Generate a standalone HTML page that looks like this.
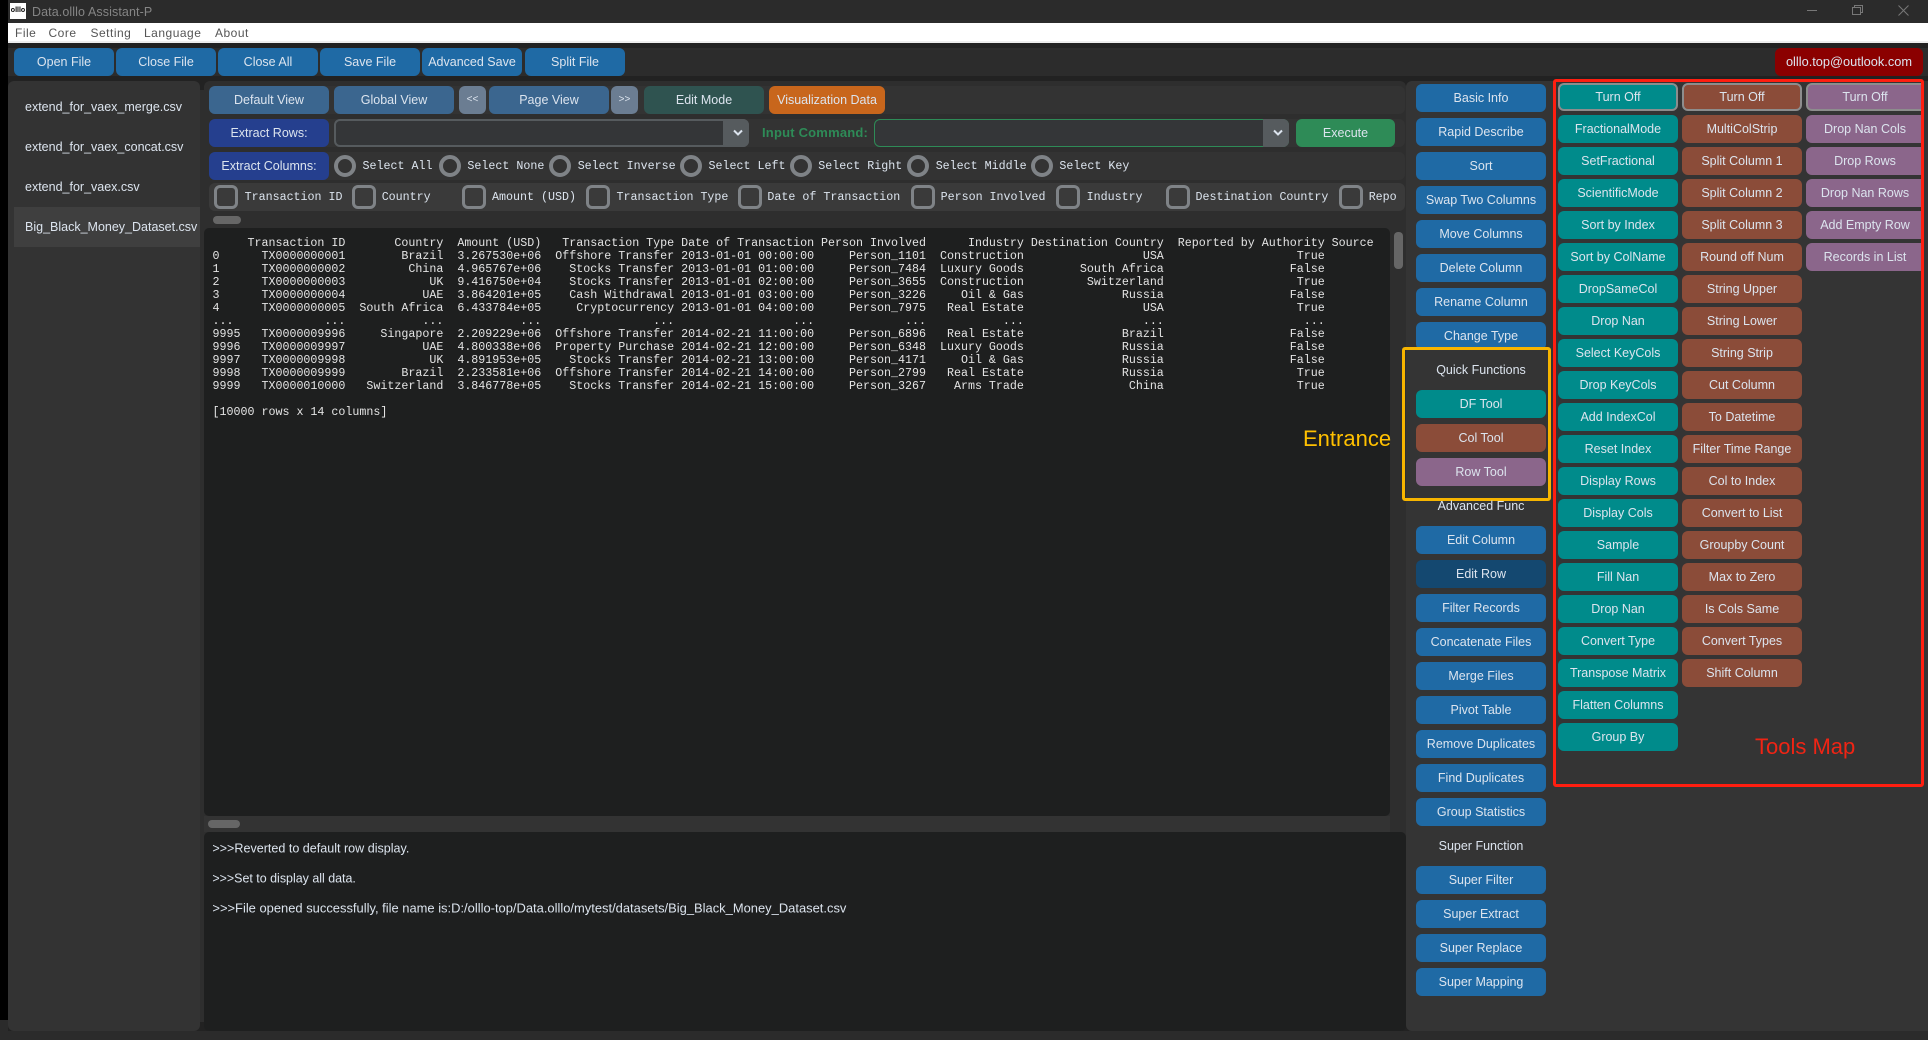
<!DOCTYPE html>
<html><head><meta charset="utf-8"><title>Data.olllo Assistant-P</title>
<style>
html,body{margin:0;padding:0;background:#000;width:1928px;height:1040px;overflow:hidden}
*{box-sizing:border-box}
body{position:relative;font-family:"Liberation Sans",sans-serif;font-size:12.5px;color:#dce4ee}
.a{position:absolute}
.b{position:absolute;height:28px;line-height:28px;text-align:center;border-radius:6px;white-space:nowrap;overflow:hidden}
.bl{background:#1f6aa5;left:1416px;width:130px}
.t1{background:#008b8b;left:1558px;width:120px}
.t2{background:#8b4c39;left:1682px;width:120px}
.t3{background:#8b668b;left:1806px;width:118px;border-radius:6px 0 0 6px}
.off{border:2px solid #8d8d8d;line-height:24px}
.lb{position:absolute;left:1416px;width:130px;text-align:center;height:16px;line-height:16px;color:#dce4ee}
.m{position:absolute;font-family:"Liberation Mono",monospace;font-size:11.67px;color:#dce4ee;height:16px;line-height:16px;white-space:pre}
.r{position:absolute;width:22px;height:22px;top:155px;border:4px solid #7f8387;border-radius:50%}
.c{position:absolute;width:24px;height:24px;top:185px;border:3px solid #7f8387;border-radius:6px}
.f{position:absolute;left:25px;color:#dce4ee;height:16px;line-height:16px}
.mn{position:absolute;top:25px;height:16px;line-height:16px;font-size:12px;color:#555;letter-spacing:.5px}
pre{margin:0;position:absolute;left:212.5px;top:237px;font-family:"Liberation Mono",monospace;font-size:11.67px;line-height:13px;color:#e4e4e4}
</style></head><body>

<!-- title bar -->
<div class="a" style="left:8px;top:0;width:1920px;height:23px;background:#2b2b2b"></div>
<div class="a" style="left:10px;top:3px;width:16px;height:16px;background:#fff;color:#000;font-size:7px;font-weight:bold;line-height:16px;text-align:center;overflow:hidden">olllo</div>
<div class="a" style="left:32px;top:3px;height:16px;line-height:18px;color:#858585;font-size:12.5px;letter-spacing:.1px">Data.olllo Assistant-P</div>
<svg class="a" style="left:1800px;top:0" width="128" height="23" fill="none" stroke="#777" stroke-width="1">
<path d="M7 10.5H17"/><path d="M52.5 7.5h8v7h-8zM54.5 7.5v-2h8v7h-2"/><path d="M98.500 5.500l10 10M108.500 5.500l-10 10"/></svg>

<!-- menu -->
<div class="a" style="left:8px;top:23px;width:1920px;height:20px;background:#fff;border-bottom:2px solid #eee"></div>
<div class="mn" style="left:15px">File</div>
<div class="mn" style="left:48.500px">Core</div>
<div class="mn" style="left:90.500px">Setting</div>
<div class="mn" style="left:144px">Language</div>
<div class="mn" style="left:215px">About</div>

<!-- main backgrounds -->
<div class="a" style="left:8px;top:43px;width:1920px;height:997px;background:#222"></div>
<div class="a" style="left:8px;top:48px;width:1920px;height:28px;background:#2c2c2c"></div>
<div class="a" style="left:0;top:1020px;width:8px;height:20px;background:#2b2b2b"></div>
<div class="a" style="left:8px;top:1031px;width:1920px;height:9px;background:#2b2b2b"></div>

<!-- toolbar -->
<div class="b" style="left:14px;top:48px;width:100px;background:#1f6aa5">Open File</div>
<div class="b" style="left:116px;top:48px;width:100px;background:#1f6aa5">Close File</div>
<div class="b" style="left:218px;top:48px;width:100px;background:#1f6aa5">Close All</div>
<div class="b" style="left:320px;top:48px;width:100px;background:#1f6aa5">Save File</div>
<div class="b" style="left:422px;top:48px;width:100px;background:#1f6aa5">Advanced Save</div>
<div class="b" style="left:525px;top:48px;width:100px;background:#1f6aa5">Split File</div>
<div class="b" style="left:1775px;top:48px;width:148px;background:#8b0000;font-size:12.8px">olllo.top@outlook.com</div>

<!-- left file panel -->
<div class="a" style="left:198px;top:90px;width:8px;height:932px;background:#2e2e2e"></div>
<div class="a" style="left:8px;top:81px;width:192px;height:950px;background:#333;border-radius:6px"></div>
<div class="a" style="left:14px;top:207px;width:186px;height:40px;background:#3f3f3f"></div>
<div class="f" style="top:99px">extend_for_vaex_merge.csv</div>
<div class="f" style="top:139px">extend_for_vaex_concat.csv</div>
<div class="f" style="top:179px">extend_for_vaex.csv</div>
<div class="f" style="top:219px">Big_Black_Money_Dataset.csv</div>

<!-- centre -->
<div class="a" style="left:204px;top:81px;width:1202px;height:950px;background:#2e2e2e;border-radius:6px"></div>
<div class="a" style="left:209px;top:86px;width:1196px;height:28px;background:#333;border-radius:6px"></div>
<div class="a" style="left:209px;top:119px;width:1196px;height:28px;background:#333;border-radius:6px"></div>
<div class="a" style="left:209px;top:152px;width:1196px;height:28px;background:#333;border-radius:6px"></div>
<div class="a" style="left:209px;top:183px;width:1196px;height:28px;background:#3a3a3a;border-radius:6px"></div>

<div class="b" style="left:209px;top:86px;width:120px;background:#3b668f">Default View</div>
<div class="b" style="left:334px;top:86px;width:120px;background:#3b668f">Global View</div>
<div class="b" style="left:459px;top:86px;width:27px;background:#6b7d92;font-size:10px">&lt;&lt;</div>
<div class="b" style="left:489px;top:86px;width:120px;background:#3b668f">Page View</div>
<div class="b" style="left:611px;top:86px;width:27px;background:#6b7d92;font-size:10px">&gt;&gt;</div>
<div class="b" style="left:644px;top:86px;width:120px;background:#2f5350">Edit Mode</div>
<div class="b" style="left:769px;top:86px;width:116px;background:#c8661c">Visualization Data</div>

<div class="b" style="left:209px;top:119px;width:120px;background:#253f8e">Extract Rows:</div>
<div class="a" style="left:334px;top:119px;width:415px;height:28px;background:#343638;border:2px solid #565b5e;border-radius:6px"></div>
<div class="a" style="left:723px;top:119px;width:26px;height:28px;background:#565b5e;border-radius:0 6px 6px 0"></div>
<svg class="a" style="left:732px;top:129px" width="12" height="8" fill="none" stroke="#dce4ee" stroke-width="2"><path d="M2 1.500L6 5.500L10 1.500"/></svg>
<div class="a" style="left:762px;top:125px;height:16px;line-height:16px;color:#2e8b57;font-weight:bold;font-size:13px;letter-spacing:.2px">Input Command:</div>
<div class="a" style="left:874px;top:119px;width:415px;height:28px;background:#343638;border:1px solid #2e8b57;border-radius:6px"></div>
<div class="a" style="left:1263px;top:119px;width:26px;height:28px;background:#565b5e;border-radius:0 6px 6px 0"></div>
<svg class="a" style="left:1272px;top:129px" width="12" height="8" fill="none" stroke="#dce4ee" stroke-width="2"><path d="M2 1.500L6 5.500L10 1.500"/></svg>
<div class="b" style="left:1296px;top:119px;width:99px;background:#2e8b57">Execute</div>

<div class="b" style="left:209px;top:152px;width:120px;background:#253f8e">Extract Columns:</div>
<div class="r" style="left:334px"></div><div class="m" style="left:362.500px;top:158px">Select All</div>
<div class="r" style="left:439px"></div><div class="m" style="left:467.400px;top:158px">Select None</div>
<div class="r" style="left:549px"></div><div class="m" style="left:577.700px;top:158px">Select Inverse</div>
<div class="r" style="left:680px"></div><div class="m" style="left:708.500px;top:158px">Select Left</div>
<div class="r" style="left:790px"></div><div class="m" style="left:818.300px;top:158px">Select Right</div>
<div class="r" style="left:907px"></div><div class="m" style="left:935.700px;top:158px">Select Middle</div>
<div class="r" style="left:1031px"></div><div class="m" style="left:1059.400px;top:158px">Select Key</div>

<div class="c" style="left:214px"></div><div class="m" style="left:244.600px;top:189px">Transaction ID</div>
<div class="c" style="left:352px"></div><div class="m" style="left:381.700px;top:189px">Country</div>
<div class="c" style="left:462px"></div><div class="m" style="left:492px;top:189px">Amount (USD)</div>
<div class="c" style="left:586px"></div><div class="m" style="left:616.500px;top:189px">Transaction Type</div>
<div class="c" style="left:738px"></div><div class="m" style="left:767.400px;top:189px">Date of Transaction</div>
<div class="c" style="left:911px"></div><div class="m" style="left:940.600px;top:189px">Person Involved</div>
<div class="c" style="left:1056px"></div><div class="m" style="left:1086.600px;top:189px">Industry</div>
<div class="c" style="left:1166px"></div><div class="m" style="left:1195.500px;top:189px">Destination Country</div>
<div class="c" style="left:1339px"></div><div class="m" style="left:1368.700px;top:189px">Repo</div>

<div class="a" style="left:213px;top:216px;width:28px;height:8px;background:#666;border-radius:4px"></div>

<!-- data table -->
<div class="a" style="left:204px;top:228px;width:1186px;height:588px;background:#1e1f1f;border-radius:5px"></div>
<div class="a" style="left:1394px;top:232px;width:9px;height:37px;background:#666;border-radius:4px"></div>
<pre>     Transaction ID       Country  Amount (USD)   Transaction Type Date of Transaction Person Involved      Industry Destination Country  Reported by Authority Source
0      TX0000000001        Brazil  3.267530e+06  Offshore Transfer 2013-01-01 00:00:00     Person_1101  Construction                 USA                   True
1      TX0000000002         China  4.965767e+06    Stocks Transfer 2013-01-01 01:00:00     Person_7484  Luxury Goods        South Africa                  False
2      TX0000000003            UK  9.416750e+04    Stocks Transfer 2013-01-01 02:00:00     Person_3655  Construction         Switzerland                   True
3      TX0000000004           UAE  3.864201e+05    Cash Withdrawal 2013-01-01 03:00:00     Person_3226     Oil &amp; Gas              Russia                  False
4      TX0000000005  South Africa  6.433784e+05     Cryptocurrency 2013-01-01 04:00:00     Person_7975   Real Estate                 USA                   True
...             ...           ...           ...                ...                 ...             ...           ...                 ...                    ...
9995   TX0000009996     Singapore  2.209229e+06  Offshore Transfer 2014-02-21 11:00:00     Person_6896   Real Estate              Brazil                  False
9996   TX0000009997           UAE  4.800338e+06  Property Purchase 2014-02-21 12:00:00     Person_6348  Luxury Goods              Russia                  False
9997   TX0000009998            UK  4.891953e+05    Stocks Transfer 2014-02-21 13:00:00     Person_4171     Oil &amp; Gas              Russia                  False
9998   TX0000009999        Brazil  2.233581e+06  Offshore Transfer 2014-02-21 14:00:00     Person_2799   Real Estate              Russia                   True
9999   TX0000010000   Switzerland  3.846778e+05    Stocks Transfer 2014-02-21 15:00:00     Person_3267    Arms Trade               China                   True

[10000 rows x 14 columns]</pre>

<div class="a" style="left:204px;top:816px;width:1186px;height:16px;background:#333"></div>
<div class="a" style="left:208px;top:820px;width:32px;height:8px;background:#666;border-radius:4px"></div>

<!-- log -->
<div class="a" style="left:204px;top:832px;width:1202px;height:199px;background:#1e1f1f;border-radius:5px"></div>
<svg class="a" style="left:204px;top:832px" width="800" height="100" font-family="Liberation Sans, sans-serif" font-size="12.5" fill="#dce4ee">
<text x="8.400" y="20.500" textLength="197" lengthAdjust="spacingAndGlyphs">&gt;&gt;&gt;Reverted to default row display.</text>
<text x="8.400" y="50.500" textLength="143.500" lengthAdjust="spacingAndGlyphs">&gt;&gt;&gt;Set to display all data.</text>
<text x="8.400" y="80.500" textLength="634" lengthAdjust="spacingAndGlyphs">&gt;&gt;&gt;File opened successfully, file name is:D:/olllo-top/Data.olllo/mytest/datasets/Big_Black_Money_Dataset.csv</text>
</svg>

<!-- right panel -->
<div class="a" style="left:1406px;top:81px;width:522px;height:950px;background:#343434;border-radius:6px 0 0 6px"></div>

<div class="b bl" style="top:84px">Basic Info</div>
<div class="b bl" style="top:118px">Rapid Describe</div>
<div class="b bl" style="top:152px">Sort</div>
<div class="b bl" style="top:186px">Swap Two Columns</div>
<div class="b bl" style="top:220px">Move Columns</div>
<div class="b bl" style="top:254px">Delete Column</div>
<div class="b bl" style="top:288px">Rename Column</div>
<div class="b bl" style="top:322px">Change Type</div>
<div class="lb" style="top:362px">Quick Functions</div>
<div class="b" style="left:1416px;width:130px;top:390px;background:#008b8b">DF Tool</div>
<div class="b" style="left:1416px;width:130px;top:424px;background:#8b4c39">Col Tool</div>
<div class="b" style="left:1416px;width:130px;top:458px;background:#8b668b">Row Tool</div>
<div class="a" style="left:1402px;top:347px;width:149px;height:154px;border:3px solid #f7b500;border-radius:3px"></div>
<div class="lb" style="top:498px">Advanced Func</div>
<div class="b bl" style="top:526px">Edit Column</div>
<div class="b bl" style="top:560px;background:#144870">Edit Row</div>
<div class="b bl" style="top:594px">Filter Records</div>
<div class="b bl" style="top:628px">Concatenate Files</div>
<div class="b bl" style="top:662px">Merge Files</div>
<div class="b bl" style="top:696px">Pivot Table</div>
<div class="b bl" style="top:730px">Remove Duplicates</div>
<div class="b bl" style="top:764px">Find Duplicates</div>
<div class="b bl" style="top:798px">Group Statistics</div>
<div class="lb" style="top:838px">Super Function</div>
<div class="b bl" style="top:866px">Super Filter</div>
<div class="b bl" style="top:900px">Super Extract</div>
<div class="b bl" style="top:934px">Super Replace</div>
<div class="b bl" style="top:968px">Super Mapping</div>

<!-- tools col 1 -->
<div class="b t1 off" style="top:83px">Turn Off</div>
<div class="b t1" style="top:115px">FractionalMode</div>
<div class="b t1" style="top:147px">SetFractional</div>
<div class="b t1" style="top:179px">ScientificMode</div>
<div class="b t1" style="top:211px">Sort by Index</div>
<div class="b t1" style="top:243px">Sort by ColName</div>
<div class="b t1" style="top:275px">DropSameCol</div>
<div class="b t1" style="top:307px">Drop Nan</div>
<div class="b t1" style="top:339px">Select KeyCols</div>
<div class="b t1" style="top:371px">Drop KeyCols</div>
<div class="b t1" style="top:403px">Add IndexCol</div>
<div class="b t1" style="top:435px">Reset Index</div>
<div class="b t1" style="top:467px">Display Rows</div>
<div class="b t1" style="top:499px">Display Cols</div>
<div class="b t1" style="top:531px">Sample</div>
<div class="b t1" style="top:563px">Fill Nan</div>
<div class="b t1" style="top:595px">Drop Nan</div>
<div class="b t1" style="top:627px">Convert Type</div>
<div class="b t1" style="top:659px">Transpose Matrix</div>
<div class="b t1" style="top:691px">Flatten Columns</div>
<div class="b t1" style="top:723px">Group By</div>

<!-- tools col 2 -->
<div class="b t2 off" style="top:83px">Turn Off</div>
<div class="b t2" style="top:115px">MultiColStrip</div>
<div class="b t2" style="top:147px">Split Column 1</div>
<div class="b t2" style="top:179px">Split Column 2</div>
<div class="b t2" style="top:211px">Split Column 3</div>
<div class="b t2" style="top:243px">Round off Num</div>
<div class="b t2" style="top:275px">String Upper</div>
<div class="b t2" style="top:307px">String Lower</div>
<div class="b t2" style="top:339px">String Strip</div>
<div class="b t2" style="top:371px">Cut Column</div>
<div class="b t2" style="top:403px">To Datetime</div>
<div class="b t2" style="top:435px">Filter Time Range</div>
<div class="b t2" style="top:467px">Col to Index</div>
<div class="b t2" style="top:499px">Convert to List</div>
<div class="b t2" style="top:531px">Groupby Count</div>
<div class="b t2" style="top:563px">Max to Zero</div>
<div class="b t2" style="top:595px">Is Cols Same</div>
<div class="b t2" style="top:627px">Convert Types</div>
<div class="b t2" style="top:659px">Shift Column</div>

<!-- tools col 3 -->
<div class="b t3 off" style="top:83px">Turn Off</div>
<div class="b t3" style="top:115px">Drop Nan Cols</div>
<div class="b t3" style="top:147px">Drop Rows</div>
<div class="b t3" style="top:179px">Drop Nan Rows</div>
<div class="b t3" style="top:211px">Add Empty Row</div>
<div class="b t3" style="top:243px">Records in List</div>

<!-- annotations -->
<div class="a" style="left:1553px;top:79px;width:371px;height:708px;border:3px solid #ff1e10;border-radius:3px"></div>
<div class="a" style="left:1755px;top:734px;height:26px;line-height:26px;color:#f02414;font-size:22px">Tools Map</div>
<div class="a" style="left:1303px;top:426px;height:26px;line-height:26px;color:#ffc000;font-size:22px">Entrance</div>

</body></html>
